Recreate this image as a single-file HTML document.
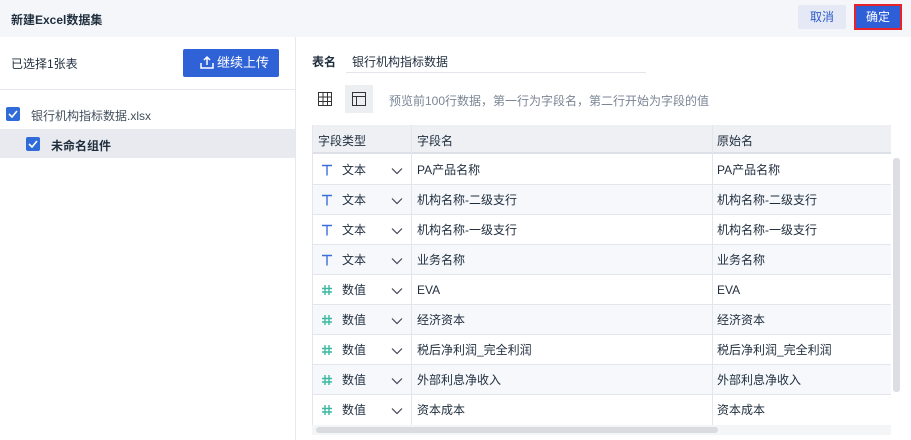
<!DOCTYPE html>
<html><head><meta charset="utf-8"><style>
*{margin:0;padding:0;box-sizing:border-box}
body{width:911px;height:440px;overflow:hidden;background:#fff;font-family:"Liberation Sans","Noto Sans CJK SC",sans-serif;font-size:12px;color:#1f2d3d;position:relative}
.hdr{position:absolute;left:0;top:0;width:911px;height:37px;background:#f5f6fa}
.abs{position:absolute}
.cb{position:absolute;width:14px;height:14px;background:#2f6bd9;border-radius:2px}
.cb svg{position:absolute;left:2px;top:3px}
.row{position:absolute;left:312px;width:579px;height:30px;border-bottom:1px solid #e3e6ec}
.row.s{background:#f6f8fc}
.row span{position:absolute;top:8px;line-height:14px}
.row svg{position:absolute}
.vl{position:absolute;top:125px;width:1px;height:307px;background:#e3e6ec}
</style></head><body>
<div class="hdr"></div>
<div class="abs" style="left:11px;top:11px;font-weight:bold;font-size:12px">新建Excel数据集</div>
<div class="abs" style="left:798px;top:5px;width:48px;height:24px;background:#e4e9f5;border-radius:2px;color:#2f5bc8;text-align:center;line-height:24px">取消</div>
<div class="abs" style="left:854px;top:4px;width:48px;height:26px;background:#2f5fd6;border:2px solid #e8222b;color:#fff;text-align:center;line-height:22px">确定</div>
<div class="abs" style="left:295px;top:37px;width:1px;height:403px;background:#e6e8ee"></div>
<div class="abs" style="left:11px;top:55px;font-size:12px">已选择1张表</div>
<div class="abs" style="left:183px;top:49px;width:96px;height:28px;background:#2f62d6;border-radius:2px;color:#fff;line-height:28px;padding-left:34px;font-size:13px">继续上传</div>
<svg class="abs" style="left:200px;top:55px" width="14" height="15" viewBox="0 0 14 15"><path d="M7 10V2M4 5l3-3 3 3M1 8v5h12V8" stroke="#fff" stroke-width="1.5" fill="none"/></svg>
<div class="abs" style="left:0;top:89px;width:295px;height:1px;background:#e6e8ee"></div>
<div class="cb" style="left:6px;top:107px"><svg width="10" height="8"><path d="M1 4l3 3 5-6" stroke="#fff" stroke-width="1.6" fill="none"/></svg></div>
<div class="abs" style="left:31px;top:107px;color:#44505e">银行机构指标数据.xlsx</div>
<div class="abs" style="left:0;top:129px;width:295px;height:29px;background:#e8eaef"></div>
<div class="cb" style="left:26px;top:137px"><svg width="10" height="8"><path d="M1 4l3 3 5-6" stroke="#fff" stroke-width="1.6" fill="none"/></svg></div>
<div class="abs" style="left:51px;top:137px;font-weight:bold">未命名组件</div>
<div class="abs" style="left:312px;top:53px;font-weight:bold">表名</div>
<div class="abs" style="left:352px;top:53px">银行机构指标数据</div>
<div class="abs" style="left:346px;top:72px;width:300px;height:1px;background:#e3e6ec"></div>
<svg class="abs" style="left:318px;top:92px" width="14" height="14"><path d="M.5.5h13v13H.5zM.5 5h13M.5 9.5h13M5 .5v13M9.5.5v13" stroke="#333" fill="none"/></svg>
<div class="abs" style="left:345px;top:85px;width:28px;height:28px;background:#eceef2"></div>
<svg class="abs" style="left:352px;top:92px" width="14" height="14"><path d="M.5.5h13v13H.5zM.5 4.5h13M4.5 4.5v9" stroke="#333" fill="none"/></svg>
<div class="abs" style="left:389px;top:92px;color:#7a8595">预览前100行数据，第一行为字段名，第二行开始为字段的值</div>
<div class="abs" style="left:312px;top:125px;width:579px;height:29px;background:#eef0f4;border-bottom:2px solid #dde0e6"></div>
<div class="abs" style="left:318px;top:132px">字段类型</div>
<div class="abs" style="left:417px;top:132px">字段名</div>
<div class="abs" style="left:717px;top:132px">原始名</div>
<svg width="0" height="0" style="position:absolute"><defs>
<symbol id="t" viewBox="0 0 12 12"><path d="M1 1.5h10M6 1.5v10" stroke="#3a6fd8" stroke-width="1.4" fill="none"/></symbol>
<symbol id="h" viewBox="0 0 12 12"><path d="M4 1v10M8 1v10M1 4.5h10M1 8h10" stroke="#3cb8a0" stroke-width="1.4" fill="none"/></symbol>
<symbol id="c" viewBox="0 0 12 8"><path d="M1 1.5l5 5 5-5" stroke="#445" stroke-width="1.2" fill="none"/></symbol>
</defs></svg>
<div class="row" style="top:155px"><svg style="left:9px;top:9px" width="12" height="12"><use href="#t"/></svg><span style="left:30px">文本</span><svg style="left:79px;top:12px" width="12" height="8"><use href="#c"/></svg><span style="left:105px">PA产品名称</span><span style="left:405px">PA产品名称</span></div>
<div class="row s" style="top:185px"><svg style="left:9px;top:9px" width="12" height="12"><use href="#t"/></svg><span style="left:30px">文本</span><svg style="left:79px;top:12px" width="12" height="8"><use href="#c"/></svg><span style="left:105px">机构名称-二级支行</span><span style="left:405px">机构名称-二级支行</span></div>
<div class="row" style="top:215px"><svg style="left:9px;top:9px" width="12" height="12"><use href="#t"/></svg><span style="left:30px">文本</span><svg style="left:79px;top:12px" width="12" height="8"><use href="#c"/></svg><span style="left:105px">机构名称-一级支行</span><span style="left:405px">机构名称-一级支行</span></div>
<div class="row s" style="top:245px"><svg style="left:9px;top:9px" width="12" height="12"><use href="#t"/></svg><span style="left:30px">文本</span><svg style="left:79px;top:12px" width="12" height="8"><use href="#c"/></svg><span style="left:105px">业务名称</span><span style="left:405px">业务名称</span></div>
<div class="row" style="top:275px"><svg style="left:9px;top:9px" width="12" height="12"><use href="#h"/></svg><span style="left:30px">数值</span><svg style="left:79px;top:12px" width="12" height="8"><use href="#c"/></svg><span style="left:105px">EVA</span><span style="left:405px">EVA</span></div>
<div class="row s" style="top:305px"><svg style="left:9px;top:9px" width="12" height="12"><use href="#h"/></svg><span style="left:30px">数值</span><svg style="left:79px;top:12px" width="12" height="8"><use href="#c"/></svg><span style="left:105px">经济资本</span><span style="left:405px">经济资本</span></div>
<div class="row" style="top:335px"><svg style="left:9px;top:9px" width="12" height="12"><use href="#h"/></svg><span style="left:30px">数值</span><svg style="left:79px;top:12px" width="12" height="8"><use href="#c"/></svg><span style="left:105px">税后净利润_完全利润</span><span style="left:405px">税后净利润_完全利润</span></div>
<div class="row s" style="top:365px"><svg style="left:9px;top:9px" width="12" height="12"><use href="#h"/></svg><span style="left:30px">数值</span><svg style="left:79px;top:12px" width="12" height="8"><use href="#c"/></svg><span style="left:105px">外部利息净收入</span><span style="left:405px">外部利息净收入</span></div>
<div class="row" style="top:395px;border-bottom:none"><svg style="left:9px;top:9px" width="12" height="12"><use href="#h"/></svg><span style="left:30px">数值</span><svg style="left:79px;top:12px" width="12" height="8"><use href="#c"/></svg><span style="left:105px">资本成本</span><span style="left:405px">资本成本</span></div>
<div class="vl" style="left:312px"></div>
<div class="vl" style="left:411px"></div>
<div class="vl" style="left:712px"></div>
<div class="abs" style="left:312px;top:425px;width:579px;height:10px;background:#f4f5f7"></div>
<div class="abs" style="left:316px;top:427px;width:402px;height:6px;background:#d9dbe0;border-radius:3px"></div>
<div class="abs" style="left:893px;top:158px;width:7px;height:234px;background:#dcdee3;border-radius:3px"></div>
</body></html>
